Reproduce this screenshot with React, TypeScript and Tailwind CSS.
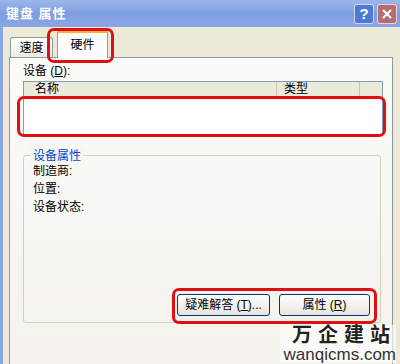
import React from "react";

const F = { fontFamily: '"Liberation Sans", "Noto Sans CJK SC", sans-serif' };

export default function App() {
  return (
    <div className="relative w-[400px] h-[364px] overflow-hidden bg-[#ece9d8] text-[12px] text-black" style={F}>
      {/* title bar */}
      <div className="h-[27px] flex items-center justify-between pl-[6px] pr-[3px] bg-gradient-to-b from-[#9db6ea] via-[#7f9ee2] to-[#8aa6e4]">
        <span className="text-white font-bold text-[13px] tracking-[1px]">键盘 属性</span>
        <div className="flex gap-[3px]">
          <div className="w-[20px] h-[20px] rounded-[3px] border border-white/70 bg-[#4e7ad6] flex items-center justify-center text-white font-bold text-[15px] leading-none">?</div>
          <div className="w-[20px] h-[20px] rounded-[3px] border border-white/70 bg-[#b96b73] flex items-center justify-center">
            <svg width="12" height="12" viewBox="0 0 12 12"><path d="M2 2L10 10M10 2L2 10" stroke="white" strokeWidth="2.2" /></svg>
          </div>
        </div>
      </div>
      <div className="flex">
        <div className="w-[3px] bg-[#8ca6e0] self-stretch h-[337px]" />
        <div className="flex-1 pl-[6px] pr-[5px] pt-[3px]">
          {/* tabs */}
          <div className="flex items-end h-[27px] pl-[1px]">
            <div className="h-[20px] w-[43px] border border-b-0 border-[#919b9c] rounded-t-[3px] bg-gradient-to-b from-white to-[#ecebe6] flex items-center justify-center">速度</div>
            <div className="h-[28px] w-[51px] ml-[4px] -mb-[1px] border border-b-0 border-[#919b9c] border-t-[3px] border-t-[#f0b43c] rounded-t-[3px] bg-[#fcfcfe] flex items-center justify-center relative z-10 pb-[2px]">硬件</div>
          </div>
          {/* panel */}
          <div className="w-[384px] h-[320px] border border-[#919b9c] bg-[#f8f7f2] bg-gradient-to-b from-[#fbfbf9] to-[#f3f2ec] pl-[13px] pt-[6px]">
            <div className="h-[14px] leading-[14px]">设备 (<u>D</u>):</div>
            <div className="w-[360px] h-[55px] mt-[3px] border border-[#7f9db9] bg-white">
              <div className="flex h-[15px] bg-[#ebeadb] border-b border-[#d6d2c2] leading-[15px]">
                <div className="w-[253px] pl-[11px] border-r border-[#c7c5b2]">名称</div>
                <div className="w-[83px] pl-[7px] border-r border-[#c7c5b2]">类型</div>
              </div>
            </div>
            {/* group */}
            <div className="relative w-[358px] h-[168px] mt-[19px] border border-[#d0d0bf] rounded-[3px] pl-[9px] pt-[9px]">
              <span className="absolute -top-[9px] left-[6px] px-[3px] bg-[#f7f6f1] text-[#0046d5]">设备属性</span>
              <div className="flex flex-col gap-[5px] leading-[13px]">
                <span>制造商:</span>
                <span>位置:</span>
                <span>设备状态:</span>
              </div>
            </div>
          </div>
        </div>
      </div>

      {/* buttons */}
      <div className="absolute left-[177px] top-[294px] flex gap-[9px]">
        <div className="w-[93px] h-[22px] border border-[#003c74] rounded-[3px] bg-gradient-to-b from-white to-[#e6e4dc] flex items-center justify-center">疑难解答 (<u>T</u>)...</div>
        <div className="w-[91px] h-[22px] border border-[#003c74] rounded-[3px] bg-gradient-to-b from-white to-[#e6e4dc] flex items-center justify-center">属性 (<u>R</u>)</div>
      </div>

      {/* red highlights */}
      <div className="absolute left-[47px] top-[28px] w-[67px] h-[35px] border-[3px] border-[#e01010] rounded-[7px] z-20" />
      <div className="absolute left-[17px] top-[96px] w-[369px] h-[41px] border-[3px] border-[#e01010] rounded-[7px]" />
      <div className="absolute left-[172px] top-[288px] w-[205px] h-[36px] border-[3px] border-[#e01010] rounded-[7px]" />

      {/* watermark */}
      <div className="absolute right-[4px] top-[325px] flex flex-col items-end bg-white/60 pl-[4px]">
        <span className="text-[20px] font-bold leading-[21px] tracking-[6px] text-[#222]">万企建站</span>
        <span className="text-[17px] leading-[17px] text-[#333]" style={{ fontFamily: '"Liberation Sans", sans-serif' }}>wanqicms.com</span>
      </div>
    </div>
  );
}
